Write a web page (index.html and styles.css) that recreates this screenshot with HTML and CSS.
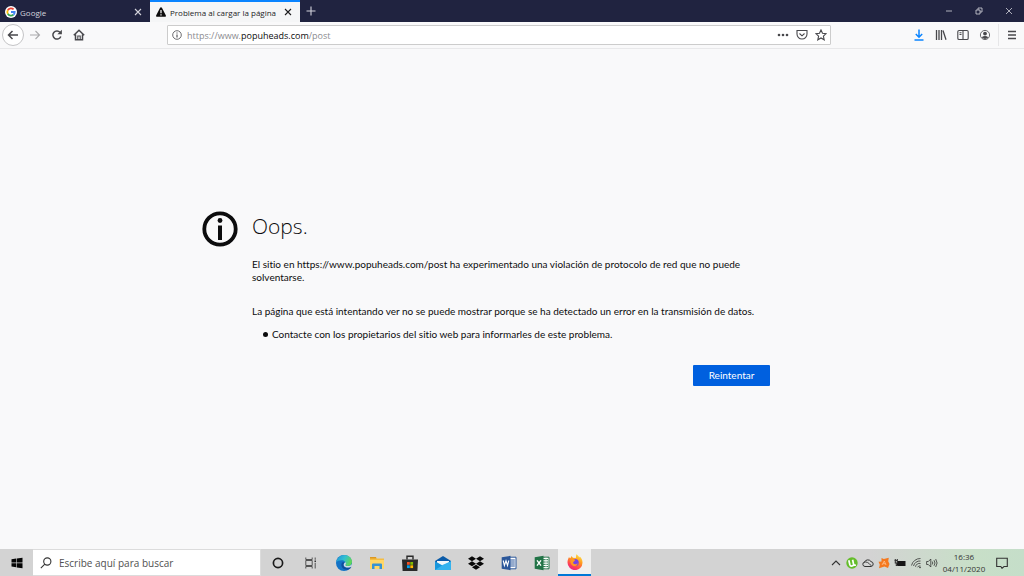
FILE: index.html
```html
<!DOCTYPE html>
<html lang="es">
<head>
<meta charset="utf-8">
<meta name="viewport" content="width=device-width, initial-scale=1">
<title>Problema al cargar la página</title>
<link rel="stylesheet" href="styles.css">
</head>
<body>
<header class="tabbar">
  <div class="tab">
    <svg class="tab-icon" viewBox="0 0 12 12"><circle cx="6" cy="6" r="6" fill="#fff"/><g fill="none" stroke-width="1.8"><path d="M2.8 4.2A3.7 3.7 0 0 1 8.6 3.4" stroke="#ea4335"/><path d="M2.8 7.8A3.7 3.7 0 0 1 2.8 4.2" stroke="#fbbc05"/><path d="M8.4 8.8A3.7 3.7 0 0 1 2.8 7.8" stroke="#34a853"/><path d="M6 6h3.7A3.7 3.7 0 0 1 8.4 8.8" stroke="#4285f4"/></g></svg>
    <span class="tab-title">Google</span>
    <button class="tab-close" aria-label="Cerrar pestaña"><svg class="i8" viewBox="0 0 8 8"><path d="M1 1l6 6M7 1L1 7" class="line"/></svg></button>
  </div>
  <div class="tab tab-active">
    <svg class="tab-icon" viewBox="0 0 12 12"><path d="M6 1.2q.6 0 .9.6l4 7.8q.4 1.2-.8 1.2H1.9Q.7 10.800 1.100 9.600l4-7.800q.3-.6.9-.6z" fill="#0c0c0d"/><path d="M6 4v3.300M6 8.300v1.200" stroke="#fff" stroke-width="1.200"/></svg>
    <span class="tab-title">Problema al cargar la página</span>
    <button class="tab-close" aria-label="Cerrar pestaña"><svg class="i8" viewBox="0 0 8 8"><path d="M1 1l6 6M7 1L1 7" class="line"/></svg></button>
  </div>
  <button class="new-tab" aria-label="Nueva pestaña"><svg class="i10" viewBox="0 0 10 10"><path d="M5 .5v9M.5 5h9" class="line"/></svg></button>
  <div class="window-buttons">
    <button aria-label="Minimizar"><svg class="i8" viewBox="0 0 8 8"><path d="M1 4h6" class="line thin"/></svg></button>
    <button aria-label="Restaurar"><svg class="i8" viewBox="0 0 8 8"><path d="M1 3h4v4H1zM3 3V1h4v4H5" class="line thin"/></svg></button>
    <button aria-label="Cerrar"><svg class="i8" viewBox="0 0 8 8"><path d="M1 1l6 6M7 1L1 7" class="line thin"/></svg></button>
  </div>
</header>

<nav class="toolbar" aria-label="Navegación">
  <div class="nav-buttons">
    <button class="back" aria-label="Atrás"><svg class="i12" viewBox="0 0 12 12"><path d="M11 6H1.500M5.500 2l-4 4 4 4" class="line bold"/></svg></button>
    <button class="dim" aria-label="Adelante"><svg class="i12" viewBox="0 0 12 12"><path d="M1 6h9.500M6.500 2l4 4-4 4" class="line"/></svg></button>
    <button aria-label="Recargar"><svg class="i12" viewBox="0 0 12 12"><path d="M9.800 7.500A4.100 4.100 0 1 1 9 3.200" class="line bold"/><path d="M10.900.8v4.500H6.400z" fill="currentColor"/></svg></button>
    <button aria-label="Inicio"><svg class="i12" viewBox="0 0 12 12"><path d="M.8 6.200L6 1.200l5.200 5M2.500 5.500v5.300h7V5.500" class="line bold"/><path d="M4.800 10.800V7h2.400v3.800" class="line"/></svg></button>
  </div>
  <div class="urlbar">
    <svg class="i10" viewBox="0 0 10 10"><circle cx="5" cy="5" r="4.300" class="line thin"/><path d="M5 4.400v3M5 2.400v1.100" class="line"/></svg>
    <a class="url" href="#">https://www.<b>popuheads.com</b>/post</a>
    <button aria-label="Acciones de página"><svg class="i12" viewBox="0 0 12 12"><g fill="currentColor"><circle cx="2" cy="6" r="1.300"/><circle cx="6" cy="6" r="1.300"/><circle cx="10" cy="6" r="1.300"/></g></svg></button>
    <button aria-label="Guardar en Pocket"><svg class="i12" viewBox="0 0 12 12"><path d="M1 1.500h10V5a5 5 0 0 1-10 0zM3.500 4.500L6 6.800l2.500-2.300" class="line"/></svg></button>
    <button aria-label="Añadir a marcadores"><svg class="i12" viewBox="0 0 12 12"><path d="M6 .9l1.500 3.300 3.600.4-2.700 2.500.8 3.700L6 9l-3.200 1.800.8-3.700L.9 4.600l3.600-.4z" class="line"/></svg></button>
  </div>
  <div class="tools">
    <button class="download" aria-label="Descargas"><svg class="i12" viewBox="0 0 12 12"><path d="M6 .5v7.300M2.800 5L6 8.200 9.200 5M1.500 11h9" class="line bold"/></svg></button>
    <button aria-label="Catálogo"><svg class="i12" viewBox="0 0 12 12"><path d="M1.500 1v10M4 1v10M6.500 1v10M8 1.500l3 9.300" class="line medium"/></svg></button>
    <button aria-label="Barra lateral"><svg class="i12" viewBox="0 0 12 12"><rect x=".8" y="1.500" width="10.400" height="9" rx="1.300" class="line"/><path d="M6 1.500v9M2.500 3.800h2M2.500 5.500h2" class="line"/></svg></button>
    <button aria-label="Cuenta"><svg class="i12" viewBox="0 0 12 12"><circle cx="6" cy="6" r="4.600" class="line thin"/><circle cx="6" cy="4.600" r="1.900" fill="currentColor"/><path d="M2.600 8.300Q6 5.700 9.400 8.300 6 11.500 2.600 8.300" fill="currentColor"/></svg></button>
    <button class="menu" aria-label="Menú"><svg class="i12" viewBox="0 0 12 12"><path d="M2 2.500h8M2 6h8M2 9.500h8" class="line medium"/></svg></button>
  </div>
</nav>

<main class="page">
  <section class="error">
    <svg class="info" viewBox="0 0 36 36"><circle cx="18" cy="18" r="15.700" fill="none" stroke="#0c0c0d" stroke-width="3.800"/><circle cx="18" cy="9.500" r="2.400" fill="#0c0c0d"/><path d="M18 14.500v14.500" stroke="#0c0c0d" stroke-width="4"/></svg>
    <div class="error-body">
      <h1>Oops.</h1>
      <p class="summary">El sitio en https://www.popuheads.com/post ha experimentado una violación de protocolo de red que no puede solventarse.</p>
      <p>La página que está intentando ver no se puede mostrar porque se ha detectado un error en la transmisión de datos.</p>
      <ul><li>Contacte con los propietarios del sitio web para informarles de este problema.</li></ul>
      <button class="retry">Reintentar</button>
    </div>
  </section>
</main>

<footer class="taskbar">
  <button class="task" aria-label="Inicio"><svg class="i12" viewBox="0 0 12 12"><path d="M.5 2.300l4.700-.7v4H.5zM5.800 1.500l5.700-.8v4.900H5.800zM.5 6.300h4.700v4l-4.700-.7zM5.800 6.300h5.700v4.900l-5.700-.8z" fill="#050505"/></svg></button>
  <label class="search">
    <svg class="i12" viewBox="0 0 12 12"><circle cx="7.300" cy="4.500" r="3.600" class="line"/><path d="M4.800 7.200L.8 11.200" class="line"/></svg>
    <input type="text" placeholder="Escribe aquí para buscar" aria-label="Buscar">
  </label>
  <button class="task" aria-label="Cortana"><svg class="i12" viewBox="0 0 12 12"><circle cx="6" cy="6" r="4.600" fill="none" stroke="#1b1b1b" stroke-width="1.700"/></svg></button>
  <button class="task" aria-label="Vista de tareas"><svg class="i12" viewBox="0 0 12 12"><path d="M.8.5v2h6.400v-2M.8 11.500v-2h6.400v2M.8 3.500h6.400v5H.8zM10.200.5v2.300M10.200 5.800v5.700" class="line thin"/><path d="M9.500 3.500h1.500v1.500H9.500z" fill="currentColor"/></svg></button>
  <button class="task" aria-label="Edge"><svg class="i16" viewBox="0 0 16 16"><defs><linearGradient id="eg" x1="0" y1="0" x2="1" y2=".4"><stop stop-color="#1b8fd6"/><stop offset=".55" stop-color="#32bfd2"/><stop offset="1" stop-color="#5fd65a"/></linearGradient></defs><circle cx="8" cy="8" r="8" fill="#1373c6"/><path d="M.2 7.500C.8 3 4.200 0 8.300 0 13 0 16 3.200 16 6.700c0 2.700-2 4.300-4.400 4.300-2 0-2.700-.8-2.300-1.500C10.300 7 8.300 5.200 5.800 5.200 3.200 5.200 1 6 .2 7.500" fill="url(#eg)"/><path d="M5.600 8.500c-1 3 1.500 6.800 6.500 6.200 1.400-.3 2.600-1.500 3.200-2.700-4 2-7.800.7-7.800-2.200 0-1 .3-1.800 1-2.300-1.300-.5-2.500-.1-2.900 1" fill="#104e9c"/><path d="M9.400 7.200c.9.700.6 1.700 0 2.500-.3.800.8 1.400 2.500 1.400 1.700 0 3.100-.6 3.900-2v2.200c-2.500 1.900-7.300 1.500-8-.9-.3-1.400.5-2.700 1.600-3.200" fill="#d3dce2"/></svg></button>
  <button class="task" aria-label="Explorador"><svg class="i16" viewBox="0 0 16 16"><path d="M1 2h6l1 1.500h7V14H1z" fill="#f5bd41"/><path d="M1 5h14v9H1z" fill="#ffd767"/><path d="M1 2h6v1.500H1z" fill="#dc9822"/><path d="M3 14V9.500Q3 8.500 4 8.500h8q1 0 1 1V14h-2.500v-3h-5v3z" fill="#3793d4"/></svg></button>
  <button class="task" aria-label="Tienda"><svg class="i16" viewBox="0 0 16 16"><path d="M5 4.500V1.200h6v3.300" fill="none" stroke="#292929" stroke-width="1.400"/><path d="M0 4.500h16l-.6 11.500H.6z" fill="#292929"/><path d="M5 7h2.800v2.800H5z" fill="#f25022"/><path d="M8.300 7h2.800v2.800H8.300z" fill="#7fba00"/><path d="M5 10.300h2.800v2.800H5z" fill="#00a4ef"/><path d="M8.300 10.300h2.800v2.800H8.300z" fill="#ffb900"/></svg></button>
  <button class="task" aria-label="Correo"><svg class="i16" viewBox="0 0 16 16"><path d="M0 6l8-5 8 5v9H0z" fill="#0b5ba8"/><path d="M2 6h12v5H2z" fill="#f5f8fa"/><path d="M0 6.200l8 4.600 8-4.600V15H0z" fill="#1896dc"/><path d="M0 15l8-5.300L16 6.200V15z" fill="#35b3ee"/></svg></button>
  <button class="task" aria-label="Dropbox"><svg class="i16" viewBox="0 0 16 16"><path d="M4 1.200l4 2.500-4 2.500-4-2.500zM12 1.200l4 2.500-4 2.500-4-2.500zM4 6.300l4 2.500-4 2.500-4-2.500zM12 6.300l4 2.500-4 2.500-4-2.500zM8 9.700l4 2.500-4 2.500-4-2.500z" fill="#080808"/></svg></button>
  <button class="task" aria-label="Word"><svg class="i16" viewBox="0 0 16 16"><path d="M8 2.200h7v11.600H8z" fill="#fff" stroke="#2b579a"/><path d="M9 5h4.800M9 7h4.800M9 9h4.800M9 11h4.800" stroke="#2b579a"/><path d="M.7 2.200L9.500.8v14.400L.7 13.800z" fill="#2b579a"/><path d="M2.200 5.500l1.200 5L5 5.800l1.500 4.700 1.300-5" fill="none" stroke="#fff" stroke-width="1.100"/></svg></button>
  <button class="task" aria-label="Excel"><svg class="i16" viewBox="0 0 16 16"><path d="M8 2.200h7v11.600H8z" fill="#fff" stroke="#217346"/><path d="M9 4.700h5M9 7h5M9 9.300h5M9 11.600h5" stroke="#217346"/><path d="M12 2.500v11" stroke="#fff" stroke-width=".7"/><path d="M.7 2.200L9.500.8v14.400L.7 13.800z" fill="#217346"/><path d="M3 5.300l4 5.400M7 5.300l-4 5.400" stroke="#fff" stroke-width="1.400"/></svg></button>
  <button class="task task-active" aria-label="Firefox"><svg class="i16" viewBox="0 0 16 16"><defs><linearGradient id="fx" x1=".8" y1="0" x2=".3" y2="1"><stop stop-color="#ffe94a"/><stop offset=".4" stop-color="#ff9a1f"/><stop offset=".75" stop-color="#ff4252"/><stop offset="1" stop-color="#e8208b"/></linearGradient></defs><path d="M1.900 3.200l1.500 1.100L4.500 2l1.400 1.700L8.800 4 9.300.2c1.600.8 2.300 2 3 3.200l.5-.8c1.800 1.800 2.800 3.800 2.700 6.100A7.500 7.500 0 0 1 .5 8.500c0-2 .6-3.800 1.400-5.300" fill="url(#fx)"/><circle cx="8.200" cy="8.500" r="3.500" fill="#7542e5"/><path d="M3.500 5.500c2-.8 3.700-.5 4.800.5L7 7.400c-1 .5-1.100 1.300-.6 2 1 1.300 3.300 1 4.300-.5-.1 2-1.700 3.600-3.800 3.300C4.200 11.600 2.800 8 3.500 5.500" fill="#ff9822"/></svg></button>
  <div class="tray">
    <svg viewBox="0 0 12 12"><path d="M2 8l4-4 4 4" class="line"/></svg>
    <svg viewBox="0 0 12 12"><circle cx="6" cy="6" r="5.700" fill="#65bd2b"/><path d="M2.800 3.200l1 4.300Q4.300 9.300 6 9 7.900 8.700 7.500 7L6.600 2.800M7.500 7q.4 1.700 2.300.9" fill="none" stroke="#fff" stroke-width="1.700"/></svg>
    <svg viewBox="0 0 12 12"><path d="M3 9.500a2.300 2.300 0 0 1-.5-4.500A3.700 3.700 0 0 1 9 4.600a2.500 2.500 0 0 1 .3 4.900z" fill="#d5d5d5" stroke="#333"/><path d="M2 5.500q3-2 7.500 3.500" fill="none" stroke="#444"/></svg>
    <svg viewBox="0 0 12 12"><path d="M3.500 1l2.300 1L10.800.8l-.6 3.500L11.500 7 10 11 6.500 9.500 1 11.200l.8-3.500L.5 4.800l3-.3z" fill="#f5781e"/><path d="M4 8l2.300-4L8 8M5 6.700h2.500" fill="none" stroke="#ffc28f" stroke-width=".8"/></svg>
    <svg viewBox="0 0 12 12"><path d="M3 4h8.500v5H3z" fill="#151515"/><path d="M.5 3.500h3M1.300 2v4h2V2M2.300 6v2.500H4" class="line"/></svg>
    <svg viewBox="0 0 12 12"><path d="M1.500 8.500A9 9 0 0 1 10.500 1.500M3.500 9A6.500 6.500 0 0 1 10.500 4M5.500 9.800A4 4 0 0 1 10.500 6.500M7.500 10.300A2.500 2.500 0 0 1 10.500 9" class="line thin"/><circle cx="10" cy="10.500" r=".8" fill="currentColor"/></svg>
    <svg viewBox="0 0 12 12"><path d="M.6 4.500h1.700L4.800 2v8L2.300 7.500H.6zM6.300 4.500q1 1.500 0 3M8 3.200q2 2.800 0 5.600M9.700 2q2.800 4 0 8" class="line thin"/></svg>
  </div>
  <div class="clock"><time datetime="16:36">16:36</time><time datetime="2020-11-04">04/11/2020</time></div>
  <button class="notify" aria-label="Notificaciones"><svg class="i12" viewBox="0 0 12 12"><path d="M.7 1.200h10.600v8.300H8L6 11.300 4.800 9.500H.7z" class="line"/></svg></button>
</footer>
</body>
</html>
```
FILE: styles.css
```css
* { box-sizing: border-box; }

body {
  margin: 0;
  min-height: 100vh;
  display: flex;
  flex-direction: column;
  background: #f9f9fa;
  color: #0c0c0d;
  font-family: "Open Sans", "Noto Sans", sans-serif;
  font-size: 9px;
}

button {
  display: flex;
  align-items: center;
  justify-content: center;
  padding: 0;
  border: 0;
  background: none;
  color: inherit;
  font: inherit;
}

svg { flex: none; display: block; }
.i8 { width: 8px; height: 8px; }
.i10 { width: 10px; height: 10px; }
.i12 { width: 12px; height: 12px; }
.i16 { width: 16px; height: 16px; }
.line { fill: none; stroke: currentColor; stroke-width: 1.1; }
.thin { stroke-width: 0.8; }
.medium { stroke-width: 1.3; }
.bold { stroke-width: 1.5; }

/* Tabs */
.tabbar {
  display: flex;
  height: 22px;
  background: #202340;
  color: #d4d4dc;
}
.tab {
  display: flex;
  align-items: center;
  gap: 3px;
  width: 150px;
  padding: 2px 6px 0 5px;
}
.tab-active {
  border-top: 2px solid #0a84ff;
  padding-top: 0;
  background: #f5f6f7;
  color: #1c1c1e;
}
.tab-icon { width: 12px; height: 12px; }
.tab-title { flex: 1; white-space: nowrap; font-size: 8px; }
.tab-close { width: 12px; height: 12px; }
.new-tab { width: 22px; }
.window-buttons { display: flex; margin-left: auto; }
.window-buttons button { width: 30px; }

/* Toolbar */
.toolbar {
  display: flex;
  align-items: center;
  height: 27px;
  padding-left: 2px;
  border-bottom: 1px solid #e8e8ea;
  background: #f9f9fa;
  color: #48484c;
}
.nav-buttons, .tools { display: flex; align-items: center; }
.nav-buttons button, .tools button { width: 22px; height: 22px; }
.toolbar .back {
  border: 1px solid #c4c4c6;
  border-radius: 50%;
  background: #fff;
}
.toolbar .dim { color: #aaaaac; }
.urlbar {
  flex: 1;
  display: flex;
  align-items: center;
  height: 20px;
  margin: 0 77px;
  padding: 0 0 0 4px;
  border: 1px solid #ccc;
  border-radius: 1px;
  background: #fff;
}
.url {
  flex: 1;
  margin-left: 5px;
  color: #8b8b8f;
  text-decoration: none;
}
.url b { font-weight: 400; color: #0c0c0d; }
.urlbar button { width: 19px; height: 18px; }
.toolbar .download { color: #0a84ff; }
.tools .menu { width: 26px; margin-left: 2px; border-left: 1px solid #e6e6e8; }

/* Error page */
.page {
  flex: 1;
  display: flex;
  align-items: center;
  justify-content: center;
  padding: 0 52px 2px 0;
}
.error { display: flex; gap: 14px; }
.info { width: 36px; height: 36px; }
.error-body {
  max-width: 518px;
  font-family: Lato, "Open Sans", sans-serif;
  font-size: 10px;
  font-variant-ligatures: none;
  line-height: 13px;
}
.error-body h1 {
  margin: 0 0 17px;
  font-family: "Open Sans", sans-serif;
  font-size: 21px;
  font-weight: 300;
  line-height: 30px;
}
.error-body p { margin: 0; }
.error-body .summary { margin-bottom: 21px; }
.error-body ul { margin: 10px 0 24px; padding-left: 11px; list-style: none; }
.error-body li { display: flex; align-items: center; gap: 4px; }
.error-body li::before {
  content: "";
  width: 5px;
  height: 5px;
  border-radius: 50%;
  background: #0c0c0d;
}
.retry {
  width: 77px;
  height: 21px;
  margin-left: auto;
  border-radius: 1px;
  background: #0060df;
  color: #fff;
}

/* Taskbar */
.taskbar {
  display: flex;
  height: 27px;
  background: linear-gradient(90deg, #d3d3d3 85%, #c8dfc8 95%, #c5dec9);
  color: #333;
}
.task { width: 33px; }
.task-active { background: #f0f0f0; border-bottom: 2px solid #0078d7; }
.search {
  display: flex;
  align-items: center;
  gap: 7px;
  width: 228px;
  padding: 0 7px;
  border: 1px solid #dcdcdc;
  border-left: 0;
  background: #fff;
}
.search input {
  flex: 1;
  min-width: 0;
  padding: 0;
  border: 0;
  outline: 0;
  background: none;
  font: inherit;
  font-size: 10px;
}
.search input::placeholder { color: #505050; opacity: 1; }
.tray { display: flex; align-items: center; gap: 4px; margin-left: auto; padding: 0 2px; }
.tray svg { width: 12px; height: 12px; }
.clock {
  display: flex;
  flex-direction: column;
  align-items: center;
  justify-content: center;
  width: 48px;
  font-size: 8px;
  line-height: 12px;
}
.notify { width: 28px; margin-right: 8px; }
```
